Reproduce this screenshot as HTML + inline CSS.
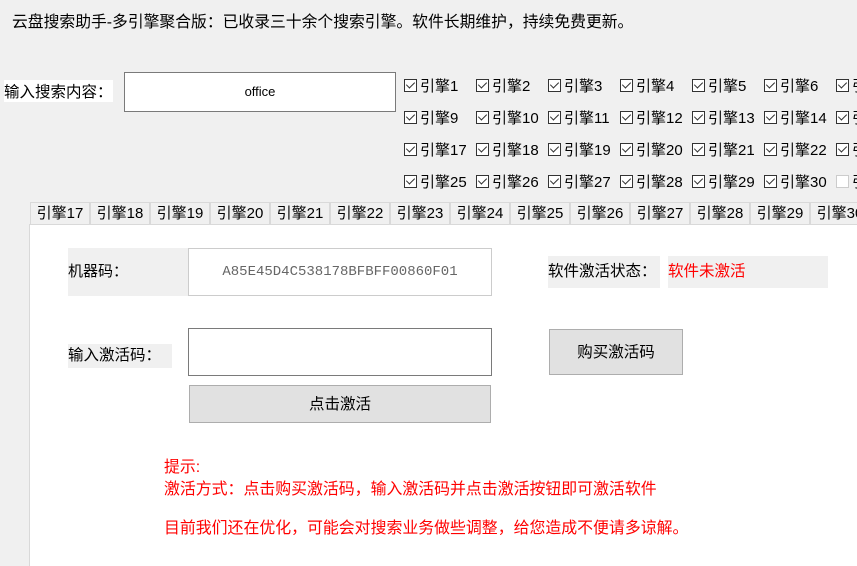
<!DOCTYPE html>
<html><head><meta charset="utf-8"><style>
*{margin:0;padding:0;box-sizing:border-box}
body{width:857px;height:564px;overflow:hidden;background:#f0f0f0;position:relative;font-family:"Liberation Sans","Noto Sans CJK SC",sans-serif;color:#000}
.a{position:absolute;white-space:nowrap}
.cb{position:absolute;font-size:15px;line-height:16px;white-space:nowrap}
.cb i{display:inline-block;width:13px;height:13px;border:1px solid #333;background:#fff;vertical-align:-1px;margin-right:3px;position:relative}
.cb i:after{content:"";position:absolute;left:3px;top:0px;width:4px;height:7px;border:solid #333;border-width:0 1.5px 1.5px 0;transform:rotate(45deg)}
.cb i.u{border-color:#ccc}.cb i.u:after{display:none}
.tab{position:absolute;top:202px;height:23px;width:60px;border:1px solid #d9d9d9;background:#f0f0f0;font-size:15px;line-height:22px;text-align:center}
.red{color:#f00}
</style></head><body>
<div class="a" style="left:12px;top:9px;font-size:15.8px">云盘搜索助手-多引擎聚合版：已收录三十余个搜索引擎。软件长期维护，持续免费更新。</div>
<div class="a" style="left:4px;top:80px;font-size:15.5px;background:#fff">输入搜索内容：</div>
<div class="a" style="left:124px;top:72px;width:272px;height:40px;border:1px solid #7a7a7a;background:#fff;font-size:13px;text-align:center;line-height:38px">office</div>
<div id="cbs"></div>
<div class="a" style="left:29px;top:224px;width:830px;height:342px;background:#fff;border-left:1px solid #d9d9d9;border-top:1px solid #d9d9d9"></div>
<div id="tabs"></div>
<div class="a" style="left:68px;top:248px;width:120px;height:48px;background:#f0f0f0;font-size:15px;line-height:48px">机器码：</div>
<div class="a" style="left:188px;top:248px;width:304px;height:48px;border:1px solid #ccc;background:#fff;font-family:'Liberation Mono',monospace;font-size:14px;color:#666;text-align:center;line-height:46px">A85E45D4C538178BFBFF00860F01</div>
<div class="a" style="left:548px;top:256px;width:112px;height:32px;background:#f0f0f0;font-size:15.5px;line-height:32px">软件激活状态：</div>
<div class="a red" style="left:668px;top:256px;width:160px;height:32px;background:#f0f0f0;font-size:15.5px;line-height:32px">软件未激活</div>
<div class="a" style="left:68px;top:344px;width:104px;height:24px;background:#f0f0f0;font-size:15.5px;line-height:24px">输入激活码：</div>
<div class="a" style="left:188px;top:328px;width:304px;height:48px;border:1px solid #7a7a7a;background:#fff"></div>
<div class="a" style="left:189px;top:385px;width:302px;height:38px;border:1px solid #adadad;background:#e1e1e1;font-size:15.5px;text-align:center;line-height:38px">点击激活</div>
<div class="a" style="left:549px;top:329px;width:134px;height:46px;border:1px solid #adadad;background:#e1e1e1;font-size:15.5px;text-align:center;line-height:46px">购买激活码</div>
<div class="a red" style="left:164px;top:457px;font-size:15.9px;line-height:22px">提示:<br>激活方式：点击购买激活码，输入激活码并点击激活按钮即可激活软件</div>
<div class="a red" style="left:164px;top:518px;font-size:15.9px;line-height:22px">目前我们还在优化，可能会对搜索业务做些调整，给您造成不便请多谅解。</div>
<script>
var h='';var rows=[[1,2,3,4,5,6,7],[9,10,11,12,13,14,15],[17,18,19,20,21,22,23],[25,26,27,28,29,30,31]];
rows.forEach(function(r,ri){r.forEach(function(n,ci){h+='<div class="cb" style="left:'+(404+ci*72)+'px;top:'+(79+ri*32)+'px"><i'+(n==31?' class="u"':'')+'></i>引擎'+n+'</div>';});});
document.getElementById('cbs').innerHTML=h;
var t='';for(var i=0;i<14;i++){t+='<div class="tab" style="left:'+(30+i*60)+'px">引擎'+(17+i)+'</div>';}
document.getElementById('tabs').innerHTML=t;
</script>
</body></html>
